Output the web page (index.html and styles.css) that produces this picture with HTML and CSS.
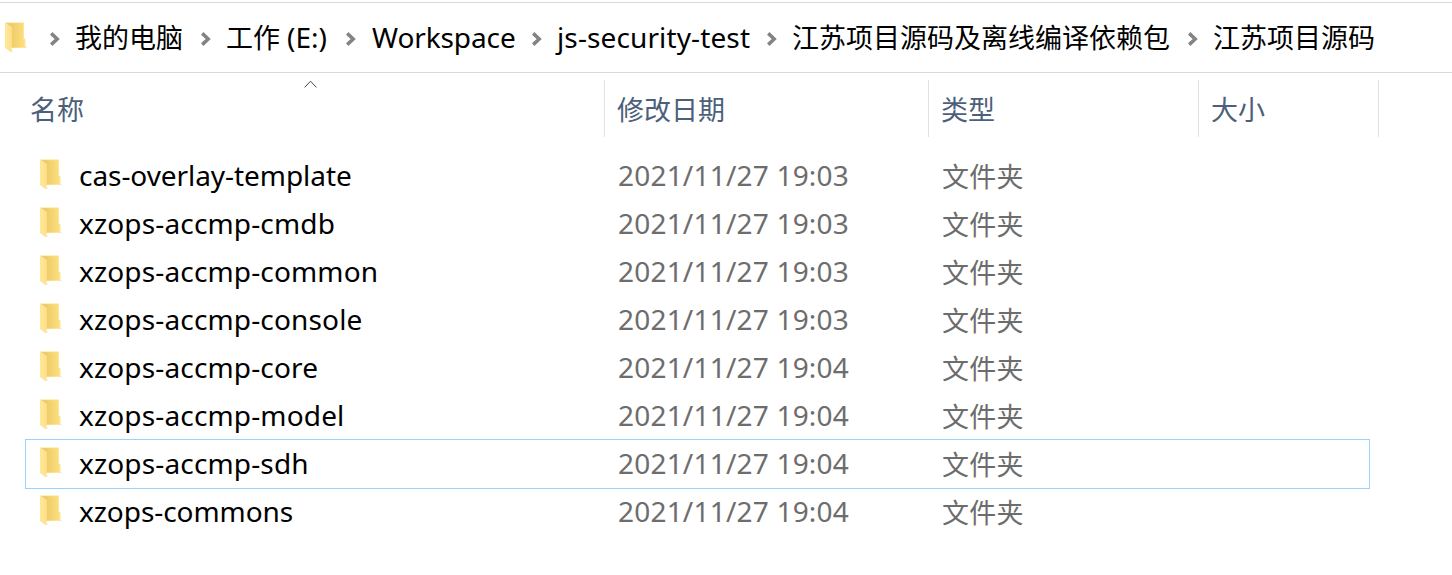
FILE: index.html
```html
<!DOCTYPE html>
<html lang="zh-CN">
<head>
<meta charset="utf-8">
<title>江苏项目源码</title>
<link rel="stylesheet" href="styles.css">
</head>
<body>
<svg class="defs" width="0" height="0">
  <defs>
    <linearGradient id="back" x1="0" x2="1"><stop offset="0.25" stop-color="#ecca67"/><stop offset="1" stop-color="#ffe07f"/></linearGradient>
    <linearGradient id="flap" x1="0" x2="1"><stop offset="0" stop-color="#ffe799"/><stop offset="1" stop-color="#ffe08a"/></linearGradient>
    <symbol id="folder" viewBox="0 0 22 32">
      <path d="M7 27 L8 30 L6 30Z M19 25h3v1h-3z" fill="#eeeeee"/>
      <path d="M0 .6H19V16.2L20.3 17.5V25.7H5V5Z" fill="url(#back)"/>
      <path d="M0 .6H19" stroke="#fff0c0" stroke-width="1"/>
      <path d="M18.5 1V16.5M19.8 18V25" stroke="#ffe68e" stroke-width="1"/>
      <path d="M0 .6L6.8 5V26L6.2 30.5L0 26Z" fill="url(#flap)"/>
    </symbol>
    <symbol id="chevron" viewBox="0 0 10 14"><path d="M1.2 1.4L7.2 7L1.2 12.6" fill="none" stroke="#838383" stroke-width="3.5"/></symbol>
  </defs>
</svg>
<nav class="address">
  <svg class="folder"><use href="#folder"/></svg>
  <svg class="chevron"><use href="#chevron"/></svg><span class="cjk">我的电脑</span>
  <svg class="chevron"><use href="#chevron"/></svg><span class="cjk">工作 <span class="drive">(E:)</span></span>
  <svg class="chevron"><use href="#chevron"/></svg><span class="workspace">Workspace</span>
  <svg class="chevron"><use href="#chevron"/></svg><span class="project">js-security-test</span>
  <svg class="chevron"><use href="#chevron"/></svg><span class="cjk">江苏项目源码及离线编译依赖包</span>
  <svg class="chevron"><use href="#chevron"/></svg><span class="cjk">江苏项目源码</span>
</nav>
<header class="columns">
  <div class="col"><span>名称</span><svg class="sort" viewBox="0 0 14 8"><path d="M.6 7.4L6.5 1.2L12.4 7.4" fill="none" stroke="#444" stroke-width="1"/></svg></div>
  <div class="col"><span>修改日期</span></div>
  <div class="col"><span>类型</span></div>
  <div class="col"><span>大小</span></div>
</header>
<main class="files">
  <div class="row"><svg class="folder"><use href="#folder"/></svg><span class="name cas">cas-overlay-template</span><span class="date">2021/11/27 19:03</span><span class="cjk">文件夹</span></div>
  <div class="row"><svg class="folder"><use href="#folder"/></svg><span class="name">xzops-accmp-cmdb</span><span class="date">2021/11/27 19:03</span><span class="cjk">文件夹</span></div>
  <div class="row"><svg class="folder"><use href="#folder"/></svg><span class="name">xzops-accmp-common</span><span class="date">2021/11/27 19:03</span><span class="cjk">文件夹</span></div>
  <div class="row"><svg class="folder"><use href="#folder"/></svg><span class="name">xzops-accmp-console</span><span class="date">2021/11/27 19:03</span><span class="cjk">文件夹</span></div>
  <div class="row"><svg class="folder"><use href="#folder"/></svg><span class="name">xzops-accmp-core</span><span class="date">2021/11/27 19:04</span><span class="cjk">文件夹</span></div>
  <div class="row"><svg class="folder"><use href="#folder"/></svg><span class="name">xzops-accmp-model</span><span class="date">2021/11/27 19:04</span><span class="cjk">文件夹</span></div>
  <div class="row focused"><svg class="folder"><use href="#folder"/></svg><span class="name">xzops-accmp-sdh</span><span class="date">2021/11/27 19:04</span><span class="cjk">文件夹</span></div>
  <div class="row"><svg class="folder"><use href="#folder"/></svg><span class="name commons">xzops-commons</span><span class="date">2021/11/27 19:04</span><span class="cjk">文件夹</span></div>
</main>
</body>
</html>
```

FILE: styles.css
```css
* { box-sizing: border-box; }
body {
  margin: 0;
  padding-top: 2px;
  height: 575px;
  overflow: hidden;
  background: #fff;
  color: #000;
  font: 28px/48px "Noto Sans", "Noto Sans CJK SC", sans-serif;
  white-space: nowrap;
}
.defs { position: absolute; }
.cjk, .col { font-family: "Noto Sans CJK SC", sans-serif; font-size: 27px; }
.folder { width: 22px; height: 32px; }
.address {
  display: grid;
  grid-template-columns: 45px 26px 125px 26px 119px 26px 160px 25px 210px 26px 395px 26px auto;
  align-items: center;
  height: 71px;
  padding-left: 5px;
  border-top: 1px solid #d9d9d9;
  border-bottom: 1px solid #d9d9d9;
}
.address > span { margin-top: -2px; }
.address > .cjk { margin-left: -1px; }
.address .folder { margin-top: 1px; }
.chevron { width: 10px; height: 14px; margin-top: 3px; }
.drive { margin-left: 1px; font-family: "Noto Sans", sans-serif; font-size: 28px; }
.workspace { letter-spacing: -0.1px; }
.project { letter-spacing: 0.12px; }
.columns {
  display: grid;
  grid-template-columns: 574px 324px 270px 180px;
  height: 57px;
  margin: 7px 0 14px 31px;
  color: #4c607a;
}
.col {
  position: relative;
  border-right: 1px solid #e2e2e2;
  line-height: 58px;
  height: 57px;
}
.col span { margin-left: -1px; }
.col + .col { padding-left: 13px; }
.sort { position: absolute; left: 273px; top: 0; width: 14px; height: 8px; }
.files { margin-left: 25px; width: 1345px; }
.row {
  display: grid;
  grid-template-columns: 39px 539px 324px auto;
  grid-template-rows: 48px;
  align-items: center;
  height: 48px;
  padding-left: 15px;
  color: #6d6d6d;
}
.row .cjk { padding-top: 1px; letter-spacing: 0.2px; line-height: 47px; }
.name { color: #000; letter-spacing: 0.15px; }
.name.cas, .name.commons { letter-spacing: -0.06px; }
.date { letter-spacing: 0.2px; }
.focused {
  height: 50px;
  margin-bottom: -2px;
  box-shadow: inset 0 0 0 1px #99d1ff;
}
```
